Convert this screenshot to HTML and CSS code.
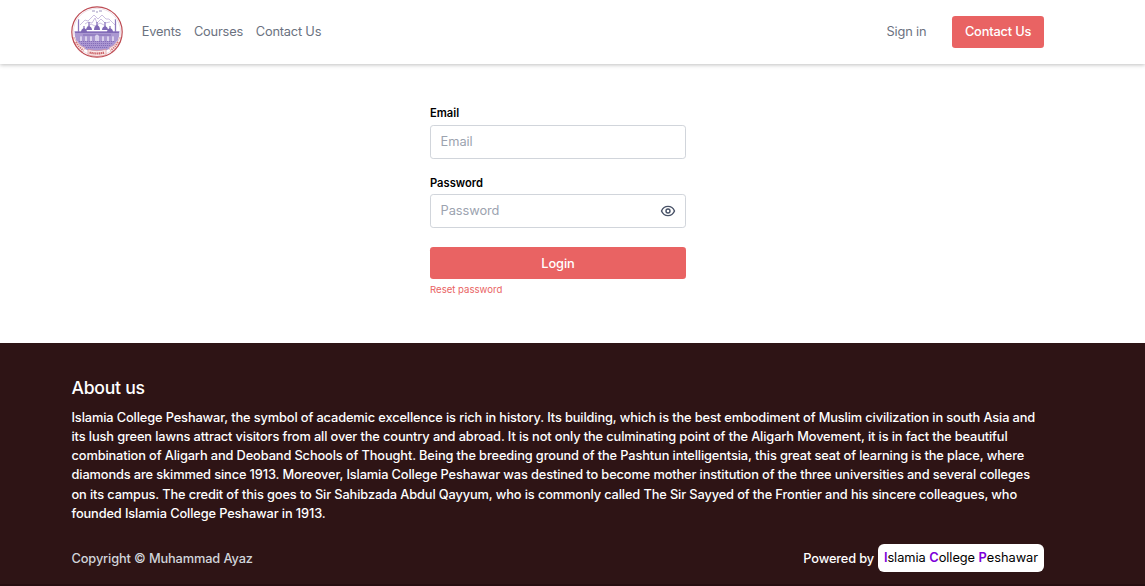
FILE: index.html
```html
<!DOCTYPE html>
<html lang="en">
<head>
<meta charset="utf-8">
<title>Sign in</title>
<link rel="stylesheet" href="styles.css">
</head>
<body>
<header class="site-header">
  <a class="logo" aria-label="Home">
    <svg viewBox="0 0 52 52" width="52" height="52" fill="none">
      <defs>
        <clipPath id="seal"><circle cx="26" cy="26" r="22.5"/></clipPath>
      </defs>
      <circle cx="26" cy="26" r="25.3" fill="#fff"/>
      <circle cx="26" cy="26" r="23.6" stroke="#e3c9d6" stroke-width=".6"/>
      <g clip-path="url(#seal)">
        <path d="M9 19l5-5 3 1 6-6 4 4 4-4 4 4 3 0 7 7M14 18l3-2 4 1 3-5 2 5 4-4 4 4 5-1M16 21l4-3 4 2 5-3 6 3" stroke="#c6b9df" stroke-width=".9"/>
        <path d="M21 5h3m1 1h2m1-1h3" stroke="#9d93bf" stroke-width="1.2"/>
        <path d="M3 25h46v10H3z" fill="#ab98d1"/>
        <path d="M7.500 13v14M44.500 13v14M13 20v7M39 20v7M18 16v8M26 16v7M34 16v8" stroke="#8d77bd" stroke-width="1.300"/>
        <path d="M15 24q0-3 3-4q3 1 3 4zM23 24q0-4 3-5q3 1 3 5zM31 24q0-3 3-4q3 1 3 4zM10 26q0-3 3-4q3 1 3 4zM36 26q0-3 3-4q3 1 3 4z" fill="#7f68b5"/>
        <path d="M4 26.500h44M12 29h28" stroke="#7d67b3" stroke-width=".9"/>
        <path d="M9 35v-4q1-2 2 0v4zM14 35v-4q1-2 2 0v4zM19 35v-4q1-2 2 0v4zM24 35v-5q2-3 4 0v5zM31 35v-4q1-2 2 0v4zM36 35v-4q1-2 2 0v4zM41 35v-4q1-2 2 0v4z" fill="#d9cfec"/>
        <path d="M6 35h40q-6 11-20 11T6 35z" fill="#ab97d2"/>
        <path d="M8 35.500h36M10 37.500h32M12 39.500h28M15 41.500h22" stroke="#806ab6" stroke-width=".9" stroke-dasharray="1.200 .8"/>
      </g>
      <path d="M3 31q3 8 11 11l-3 5Q4 42 2 33zM49 31q-3 8-11 11l3 5q7-5 9-14z" fill="#fbeeee" stroke="#e0a0a4" stroke-width=".7"/>
      <path d="M17 43.500q9 2.500 18 0v5.500q-9 3-18 0z" fill="#fbeaea" stroke="#dc9496" stroke-width=".7"/>
      <path d="M18.500 46.500q7.500 2 15 0" stroke="#cd676b" stroke-width="2.200" stroke-dasharray="1.400 .5"/>
      <path d="M5 36q3 5.500 7 8M47 36q-3 5.500-7 8" stroke="#d3777b" stroke-width="1.900" stroke-dasharray="1.300 .9"/>
      <circle cx="26" cy="26" r="25.200" stroke="#bd4b53" stroke-width="1.200"/>
    </svg>
  </a>
  <nav class="nav">
    <a>Events</a>
    <a>Courses</a>
    <a>Contact Us</a>
  </nav>
  <div class="actions">
    <a class="signin">Sign in</a>
    <a class="contact">Contact Us</a>
  </div>
</header>
<main class="login">
  <form class="form">
    <label class="label" for="email">Email</label>
    <input class="field" id="email" type="email" placeholder="Email">
    <label class="label label-next" for="password">Password</label>
    <div class="field-wrap">
      <input class="field field-password" id="password" type="password" placeholder="Password">
      <svg class="eye" viewBox="0 0 16 16" width="16" height="16" fill="none" stroke="#475166" stroke-width="1.400">
        <path d="M1.500 8C2.700 5.200 5.100 3.400 8 3.400S13.300 5.200 14.500 8C13.300 10.800 10.900 12.600 8 12.600S2.700 10.800 1.500 8z"/>
        <circle cx="8" cy="8" r="2"/>
      </svg>
    </div>
    <button class="submit" type="button">Login</button>
    <a class="reset">Reset password</a>
  </form>
</main>
<footer class="footer">
  <h2 class="footer-title">About us</h2>
  <p class="about">Islamia College Peshawar, the symbol of academic excellence is rich in history. Its building, which is the best embodiment of Muslim civilization in south Asia and its lush green lawns attract visitors from all over the country and abroad. It is not only the culminating point of the Aligarh Movement, it is in fact the beautiful combination of Aligarh and Deoband Schools of Thought. Being the breeding ground of the Pashtun intelligentsia, this great seat of learning is the place, where diamonds are skimmed since 1913. Moreover, Islamia College Peshawar was destined to become mother institution of the three universities and several colleges on its campus. The credit of this goes to Sir Sahibzada Abdul Qayyum, who is commonly called The Sir Sayyed of the Frontier and his sincere colleagues, who founded Islamia College Peshawar in 1913.</p>
  <div class="footer-row">
    <span class="copyright">Copyright © Muhammad Ayaz</span>
    <div class="powered"><span class="by">Powered by</span> <span class="badge"><b>I</b>slamia <b>C</b>ollege <b>P</b>eshawar</span></div>
  </div>
</footer>
</body>
</html>
```
FILE: styles.css
```css
* { box-sizing: border-box; }
body {
  margin: 0;
  height: 586px;
  overflow: hidden;
  display: flex;
  flex-direction: column;
  background: #fff;
  font: 400 12.8px/19.2px Inter, sans-serif;
  color: #000;
}
.site-header {
  flex: none;
  height: 64px;
  padding: 0 101px 0 71.300px;
  display: flex;
  align-items: center;
  box-shadow: 0 1px 4px rgba(0, 0, 0, .25);
}
.logo, .logo svg { display: block; }
.nav { display: flex; gap: 12.900px; margin-left: 18.500px; color: #6b7280; letter-spacing: -.2px; }
.actions { display: flex; align-items: center; gap: 25.900px; margin-left: auto; color: #6b7280; letter-spacing: -.16px; }
.contact {
  padding: 6.400px 12.700px;
  border-radius: 3.200px;
  background: #e96363;
  color: #fff;
  font-weight: 500;
}
.login { flex: none; height: 279px; padding: 41px 0 0 430px; }
.form { width: 256px; display: flex; flex-direction: column; }
.label { font-size: 11.200px; line-height: 16px; font-weight: 600; margin-bottom: 3.500px; }
.label-next { margin-top: 16px; }
.field {
  display: block;
  width: 100%;
  height: 34px;
  padding: 0 9.600px;
  border: 1px solid #d1d5db;
  border-radius: 3.200px;
  background: #fff;
  font: inherit;
  letter-spacing: -.06px;
  outline: none;
}
.field-password { padding-bottom: 1.500px; }
.field::placeholder { color: #9ca3af; }
.field-wrap { position: relative; }
.eye { position: absolute; right: 10px; top: 9px; }
.submit {
  height: 32px;
  margin-top: 19px;
  padding: 2px 0 0;
  border: 0;
  border-radius: 3.200px;
  background: #e96363;
  color: #fff;
  font: 500 12.800px/19.200px Inter, sans-serif;
  letter-spacing: -.1px;
}
.reset { margin-top: 4px; font-size: 9.600px; line-height: 14px; color: #e96363; }
.footer {
  flex: 1;
  padding: 35px 101px 0 71.500px;
  border-bottom: 2px solid #260e10;
  background: #2e1415;
  color: #fff;
  font-weight: 500;
  letter-spacing: -.13px;
}
.footer-title { margin: 0 0 9.800px; font-size: 17.600px; line-height: 20px; font-weight: 500; letter-spacing: -.26px; }
.about { margin: 0; letter-spacing: -.117px; }
.footer-row { display: flex; align-items: center; justify-content: space-between; margin-top: 20.700px; }
.copyright { padding-top: 2px; color: #d1d5db; }
.powered { display: flex; align-items: center; gap: 4px; }
.by { padding-top: 2px; letter-spacing: -.16px; }
.badge {
  height: 28px;
  padding: 4.500px 6px;
  border-radius: 6px;
  background: #fff;
  color: #000;
  font-weight: 400;
  letter-spacing: -.04px;
}
.badge b { font-weight: 600; color: #7e00d9; }
```
